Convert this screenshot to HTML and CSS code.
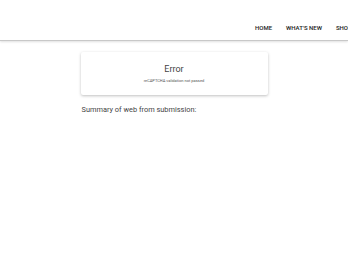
FILE: index.html
```html
<!DOCTYPE html>
<html lang="en">
<head>
    <meta charset="UTF-8">
    <meta name="viewport" content="width=device-width, initial-scale=1.0">
    <title>Error</title>
    <link rel="stylesheet" href="styles.css">
</head>
<body>

    <header class="site-header">
        <nav class="main-nav">
            <a href="#">Home</a>
            <a href="#">What's New</a>
            <a href="#">Shop</a>
        </nav>
    </header>

    <main class="content">
        <div class="error-card">
            <h1 class="error-title">Error</h1>
            <p class="error-text">reCAPTCHA validation not passed</p>
        </div>

        <h2 class="summary-title">Summary of web from submission:</h2>
    </main>

</body>
</html>
```

FILE: styles.css
```css
body {
    margin: 0;
    font-family: Roboto, "Liberation Sans", Arial, sans-serif;
    background-color: #fff;
    color: #444;
    overflow: hidden;
}

.site-header {
    height: 40px;
    background-color: #fff;
    border-bottom: 1px solid #c8c8c8;
    box-shadow: 0 1px 2px rgba(0, 0, 0, 0.12);
}

.main-nav {
    display: flex;
    gap: 14px;
    padding-left: 255px;
    padding-top: 24px;
    white-space: nowrap;
}

.main-nav a {
    font-size: 6px;
    font-weight: 500;
    text-transform: uppercase;
    color: #222;
    text-decoration: none;
}

.content {
    width: 187px;
    margin: 11px auto 0;
}

.error-card {
    height: 43px;
    box-sizing: border-box;
    padding-top: 12px;
    text-align: center;
    background-color: #fff;
    box-shadow: 0 1px 3px rgba(0, 0, 0, 0.25);
    border-radius: 2px;
}

.error-title {
    margin: 0;
    font-size: 9px;
    font-weight: 400;
    line-height: 11px;
    color: #444;
}

.error-text {
    margin: 3px 0 0;
    font-size: 4px;
    line-height: 5px;
    color: #555;
}

.summary-title {
    margin: 10px 0 0 1px;
    font-size: 7.4px;
    font-weight: 400;
    line-height: 10px;
    color: #444;
}
```
